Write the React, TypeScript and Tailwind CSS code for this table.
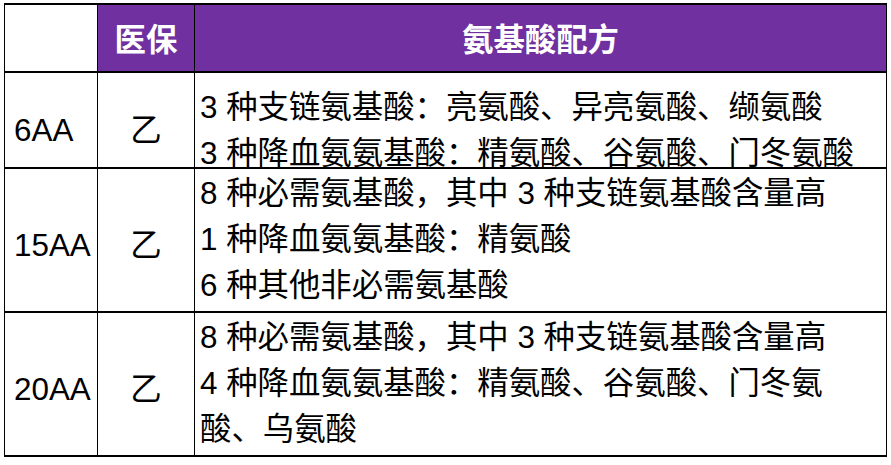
import React from 'react';

const font = {
  fontFamily: '"Liberation Sans", "Noto Sans CJK SC", sans-serif',
};

interface Row {
  name: string;
  level: string;
  lines: string[];
  height: string;
  textPad: string;
}

const rows: Row[] = [
  {
    name: '6AA',
    level: '乙',
    lines: ['3 种支链氨基酸：亮氨酸、异亮氨酸、缬氨酸', '3 种降血氨氨基酸：精氨酸、谷氨酸、门冬氨酸'],
    height: 'h-[96px]',
    textPad: 'pt-[12px]',
  },
  {
    name: '15AA',
    level: '乙',
    lines: ['8 种必需氨基酸，其中 3 种支链氨基酸含量高', '1 种降血氨氨基酸：精氨酸', '6 种其他非必需氨基酸'],
    height: 'h-[144px]',
    textPad: 'pt-0',
  },
  {
    name: '20AA',
    level: '乙',
    lines: ['8 种必需氨基酸，其中 3 种支链氨基酸含量高', '4 种降血氨氨基酸：精氨酸、谷氨酸、门冬氨', '酸、乌氨酸'],
    height: 'h-[142px]',
    textPad: 'pt-0',
  },
];

export default function App() {
  return (
    <div className="w-[891px] h-[465px] bg-white pt-[3px] pl-[4px]" style={font}>
      <div className="w-[883px] border-l border-r border-t-2 border-b-2 border-black text-[31.4px] text-black">
        {/* Header */}
        <div className="grid grid-cols-[92px_97px_1fr] h-[68px] border-b-2 border-black">
          <div className="bg-white" />
          <div className="border-l border-black bg-[#7030a0] text-white font-bold flex items-center justify-center pt-[6px]">
            医保
          </div>
          <div className="border-l border-black bg-[#7030a0] text-white font-bold flex items-center justify-center pt-[6px]">
            氨基酸配方
          </div>
        </div>

        {/* Body */}
        {rows.map((row, i) => (
          <div
            key={row.name}
            className={`grid grid-cols-[92px_97px_1fr] ${row.height} ${i < rows.length - 1 ? 'border-b-2 border-black' : ''}`}
          >
            <div className="flex items-center pl-[9px] pt-[12px]">{row.name}</div>
            <div className="border-l border-black flex items-center justify-center pt-[12px]">{row.level}</div>
            <div className={`border-l border-black flex flex-col justify-center pl-[5px] leading-[46px] whitespace-nowrap ${row.textPad}`}>
              {row.lines.map((l) => (
                <div key={l}>{l}</div>
              ))}
            </div>
          </div>
        ))}
      </div>
    </div>
  );
}
